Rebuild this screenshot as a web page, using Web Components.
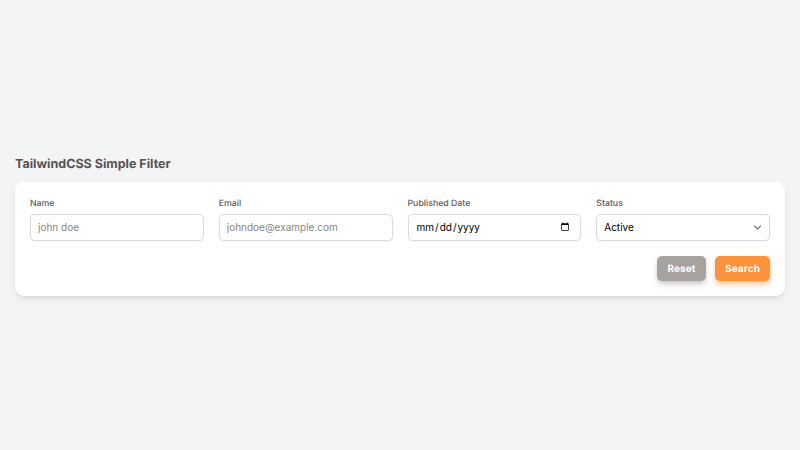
<!DOCTYPE html>
<html lang="en">
<head>
<meta charset="utf-8">
<title>TailwindCSS Simple Filter</title>
<style>
    html, body { margin: 0; height: 100%; }
    body {
        background: #f3f4f6;
        font-family: Inter, "Liberation Sans", sans-serif;
        text-rendering: geometricPrecision;
    }
</style>
</head>
<body>
<filter-page>
    <filter-field label="Name"><input type="text" placeholder="john doe"></filter-field>
    <filter-field label="Email"><input type="text" placeholder="johndoe@example.com"></filter-field>
    <filter-field label="Published Date"><input type="date"></filter-field>
    <filter-field label="Status"><select><option>Active</option><option>Inactive</option></select></filter-field>
    <filter-button slot="actions" kind="reset">Reset</filter-button>
    <filter-button slot="actions" kind="search">Search</filter-button>
</filter-page>

<script>
    const chevron = "url(\"data:image/svg+xml,%3Csvg xmlns='http://www.w3.org/2000/svg' viewBox='0 0 20 20' fill='none'%3E%3Cpath d='M6 8l4 4 4-4' stroke='%236b7280' stroke-width='1.5' stroke-linecap='round' stroke-linejoin='round'/%3E%3C/svg%3E\")";

    class FilterPage extends HTMLElement {
        constructor() {
            super();
            this.attachShadow({mode: 'open'}).innerHTML = `
                <style>
                    :host {
                        display: flex;
                        flex-direction: column;
                        justify-content: center;
                        box-sizing: border-box;
                        height: 100vh;
                        padding: 0 15px;
                    }
                    h1 {
                        margin: 0 0 8px;
                        font-size: 12.5px;
                        line-height: 19px;
                        font-weight: 700;
                        color: #57534e;
                    }
                    .card {
                        background: #fff;
                        border-radius: 9px;
                        padding: 15px;
                        box-shadow: 0 4px 8px -2px rgba(0, 0, 0, .1), 0 2px 4px -2px rgba(0, 0, 0, .08);
                    }
                    .grid {
                        display: grid;
                        grid-template-columns: repeat(4, 1fr);
                        gap: 15px;
                    }
                    .actions {
                        display: flex;
                        justify-content: flex-end;
                        gap: 9.5px;
                        margin-top: 15px;
                    }
                </style>
                <h1>TailwindCSS Simple Filter</h1>
                <div class="card">
                    <div class="grid"><slot></slot></div>
                    <div class="actions"><slot name="actions"></slot></div>
                </div>`;
        }
    }

    class FilterField extends HTMLElement {
        constructor() {
            super();
            this.attachShadow({mode: 'open'}).innerHTML = `
                <style>
                    :host { display: block; min-width: 0; }
                    label {
                        display: block;
                        font-size: 8.75px;
                        line-height: 14.5px;
                        font-weight: 500;
                        color: #5f5a56;
                        margin-bottom: 2.5px;
                    }
                    ::slotted(input), ::slotted(select) {
                        display: block;
                        box-sizing: border-box;
                        width: 100%;
                        height: 27px;
                        margin: 0;
                        padding: 0 7px;
                        background-color: #fff;
                        border: 1px solid #dcdad8;
                        border-radius: 4.5px;
                        box-shadow: 0 1px 2px rgba(0, 0, 0, .04);
                        font: 400 10px Inter, "Liberation Sans", sans-serif;
                        color: #000;
                        outline: none;
                    }
                    ::slotted(input)::placeholder { color: #78716c; opacity: .85; }
                    ::slotted(input[type="date"]) { padding-right: 8px; }
                    ::slotted(select) {
                        appearance: none;
                        background-image: ${chevron};
                        background-repeat: no-repeat;
                        background-position: right 4.5px center;
                        background-size: 15px 15px;
                    }
                </style>
                <label></label>
                <slot></slot>`;
            this.shadowRoot.querySelector('label').textContent = this.getAttribute('label');
        }
    }

    class FilterButton extends HTMLElement {
        constructor() {
            super();
            this.attachShadow({mode: 'open'}).innerHTML = `
                <style>
                    :host { display: block; }
                    button {
                        display: block;
                        height: 25px;
                        padding: 1px 10px 0;
                        border: 0;
                        border-radius: 5px;
                        font: 700 10px Inter, "Liberation Sans", sans-serif;
                        letter-spacing: .1px;
                        text-rendering: geometricPrecision;
                        color: #fff;
                    }
                    :host([kind="reset"]) button {
                        background: #a8a29e;
                        box-shadow: 0 4px 6px -1px rgba(168, 162, 158, .5), 0 2px 4px -2px rgba(168, 162, 158, .5);
                    }
                    :host([kind="search"]) button {
                        background: #fb923c;
                        box-shadow: 0 4px 6px -1px rgba(251, 146, 60, .5), 0 2px 4px -2px rgba(251, 146, 60, .5);
                    }
                </style>
                <button type="button"><slot></slot></button>`;
        }
    }

    customElements.define('filter-page', FilterPage);
    customElements.define('filter-field', FilterField);
    customElements.define('filter-button', FilterButton);
</script>
</body>
</html>
